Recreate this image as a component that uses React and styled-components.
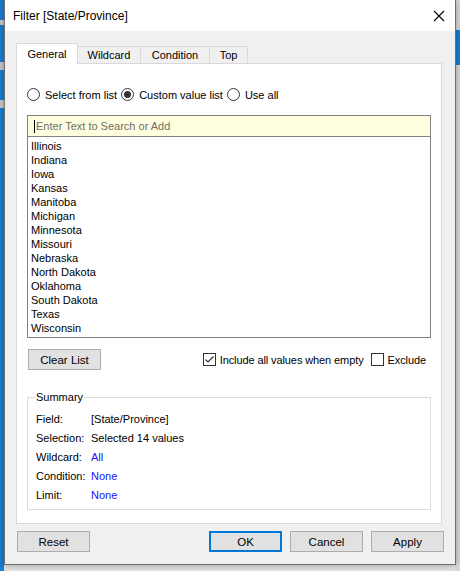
import React from "react";
import styled, { createGlobalStyle } from "styled-components";

const GlobalStyle = createGlobalStyle`
  body {
    margin: 0;
    font-family: "Liberation Sans", Arial, sans-serif;
    font-size: 11px;
    color: #000;
  }
`;

const Desktop = styled.div`
  width: 460px;
  height: 571px;
  overflow: hidden;
  background:
    linear-gradient(#dadada 0 30px, #1a7fd4 30px 65px, #dadada 65px) right top / 5px 100% no-repeat,
    linear-gradient(#1a7fd4 0 20px, #c9c9c9 20px 25px, #1a7fd4 25px 62px, #c9c9c9 62px 70px, #1a7fd4 70px 100px, #c9c9c9 100px 108px, #1a7fd4 108px) left top / 4px 100% no-repeat,
    #e4e4e4;
  padding-left: 4px;
  box-sizing: border-box;
`;

const Window = styled.div`
  width: 452px;
  height: 565px;
  box-sizing: border-box;
  border: 1px solid #6f6f6f;
  border-top: none;
  background: #f0f0f0;
  box-shadow: 0 0 7px rgba(0, 0, 0, 0.35);
  display: flex;
  flex-direction: column;
`;

const TitleBar = styled.div`
  height: 31px;
  background: #fff;
  display: flex;
  align-items: center;
  justify-content: space-between;
  padding: 0 10px 0 8px;
  font-size: 12px;
  flex-shrink: 0;
`;

const CloseBtn = styled.div`
  width: 12px;
  height: 12px;
  display: flex;
`;

const Body = styled.div`
  flex: 1;
  padding: 11px 0 0 11px;
  display: flex;
  flex-direction: column;
`;

const TabStrip = styled.div`
  display: flex;
  align-items: flex-end;
  height: 21px;
  position: relative;
  z-index: 1;
`;

const Tab = styled.div`
  width: ${(p) => p.w}px;
  height: ${(p) => (p.active ? 21 : 17)}px;
  box-sizing: border-box;
  margin-left: ${(p) => (p.first ? 0 : -1)}px;
  margin-bottom: ${(p) => (p.active ? -1 : 0)}px;
  border: 1px solid #d9d9d9;
  border-bottom: none;
  background: ${(p) => (p.active ? "#fff" : "#f0f0f0")};
  display: flex;
  align-items: center;
  justify-content: center;
`;

const Panel = styled.div`
  width: 426px;
  height: 461px;
  box-sizing: border-box;
  border: 1px solid #d9d9d9;
  background: #fff;
  padding: 24px 10px 0 10px;
  display: flex;
  flex-direction: column;
`;

const RadioRow = styled.div`
  display: flex;
  align-items: center;
  height: 13px;
  gap: 4px;
`;

const RadioLabel = styled.span`
  margin-left: 1px;
`;

const RadioCircle = styled.span`
  width: 13px;
  height: 13px;
  box-sizing: border-box;
  border: 1px solid #333;
  border-radius: 50%;
  background: #fff;
  display: flex;
  align-items: center;
  justify-content: center;
  &::after {
    content: "";
    width: 7px;
    height: 7px;
    border-radius: 50%;
    background: ${(p) => (p.checked ? "#333" : "transparent")};
  }
`;

const SearchBox = styled.div`
  margin-top: 14px;
  height: 22px;
  box-sizing: border-box;
  border: 1px solid #828282;
  background: #ffffdf;
  display: flex;
  align-items: center;
  padding-left: 6px;
  color: #6d6d6d;
`;

const Caret = styled.span`
  width: 1px;
  height: 13px;
  background: #000;
  margin-right: 1px;
`;

const ListBox = styled.div`
  height: 201px;
  box-sizing: border-box;
  border: 1px solid #828282;
  border-top: none;
  padding: 2px 0 0 3px;
`;

const ListItem = styled.div`
  height: 14px;
  line-height: 14px;
`;

const ControlRow = styled.div`
  margin-top: 11px;
  display: flex;
  align-items: center;
  justify-content: space-between;
  padding: 0 5px 0 1px;
`;

const Button = styled.div`
  width: ${(p) => p.w || 73}px;
  height: 21px;
  box-sizing: border-box;
  border: ${(p) => (p.primary ? "2px solid #0078d7" : "1px solid #adadad")};
  background: #e1e1e1;
  display: flex;
  align-items: center;
  justify-content: center;
  font-size: 11.5px;
`;

const Checks = styled.div`
  display: flex;
  align-items: center;
  gap: 4px;
  letter-spacing: -0.1px;
`;

const CheckBox = styled.span`
  width: 13px;
  height: 13px;
  box-sizing: border-box;
  border: 1px solid #333;
  background: #fff;
  display: flex;
  margin-left: ${(p) => p.ml || 0}px;
`;

const Group = styled.fieldset`
  margin: 21px 0 0 0;
  padding: 6px 8px 4px 8px;
  border: 1px solid #dcdcdc;
  height: 119px;
  box-sizing: border-box;
  min-width: 0;
`;

const Legend = styled.legend`
  padding: 0 1px;
  margin-left: -1px;
`;

const SummaryRow = styled.div`
  display: flex;
  height: 19px;
  align-items: center;
`;

const SummaryLabel = styled.span`
  width: 55px;
`;

const SummaryValue = styled.span`
  color: ${(p) => (p.link ? "#1414ff" : "#000")};
`;

const Footer = styled.div`
  display: flex;
  align-items: center;
  padding: 7px 0 0 1px;
  width: 427px;
`;

const FooterRight = styled.div`
  margin-left: auto;
  display: flex;
  gap: 8px;
`;

const states = [
  "Illinois",
  "Indiana",
  "Iowa",
  "Kansas",
  "Manitoba",
  "Michigan",
  "Minnesota",
  "Missouri",
  "Nebraska",
  "North Dakota",
  "Oklahoma",
  "South Dakota",
  "Texas",
  "Wisconsin",
];

const summary = [
  ["Field:", "[State/Province]", false],
  ["Selection:", "Selected 14 values", false],
  ["Wildcard:", "All", true],
  ["Condition:", "None", true],
  ["Limit:", "None", true],
];

const tabs = [
  ["General", 62],
  ["Wildcard", 64],
  ["Condition", 70],
  ["Top", 39],
];

export default function App() {
  return (
    <Desktop>
      <GlobalStyle />
      <Window>
        <TitleBar>
          Filter [State/Province]
          <CloseBtn>
            <svg width="12" height="12" viewBox="0 0 12 12">
              <path d="M1 1 L11 11 M11 1 L1 11" stroke="#000" strokeWidth="1.1" />
            </svg>
          </CloseBtn>
        </TitleBar>
        <Body>
          <TabStrip>
            {tabs.map(([t, w], i) => (
              <Tab key={t} w={w} active={i === 0} first={i === 0}>
                {t}
              </Tab>
            ))}
          </TabStrip>
          <Panel>
            <RadioRow>
              <RadioCircle />
              <RadioLabel>Select from list</RadioLabel>
              <RadioCircle checked />
              <RadioLabel>Custom value list</RadioLabel>
              <RadioCircle />
              <RadioLabel>Use all</RadioLabel>
            </RadioRow>
            <SearchBox>
              <Caret />
              Enter Text to Search or Add
            </SearchBox>
            <ListBox>
              {states.map((s) => (
                <ListItem key={s}>{s}</ListItem>
              ))}
            </ListBox>
            <ControlRow>
              <Button>Clear List</Button>
              <Checks>
                <CheckBox>
                  <svg width="11" height="11" viewBox="0 0 11 11">
                    <path d="M1.5 5.5 L4 8 L9.5 2.5" stroke="#333" strokeWidth="1.2" fill="none" />
                  </svg>
                </CheckBox>
                <span>Include all values when empty</span>
                <CheckBox ml={3} />
                <span>Exclude</span>
              </Checks>
            </ControlRow>
            <Group>
              <Legend>Summary</Legend>
              {summary.map(([l, v, link]) => (
                <SummaryRow key={l}>
                  <SummaryLabel>{l}</SummaryLabel>
                  <SummaryValue link={link}>{v}</SummaryValue>
                </SummaryRow>
              ))}
            </Group>
          </Panel>
          <Footer>
            <Button>Reset</Button>
            <FooterRight>
              <Button primary>OK</Button>
              <Button>Cancel</Button>
              <Button>Apply</Button>
            </FooterRight>
          </Footer>
        </Body>
      </Window>
    </Desktop>
  );
}
